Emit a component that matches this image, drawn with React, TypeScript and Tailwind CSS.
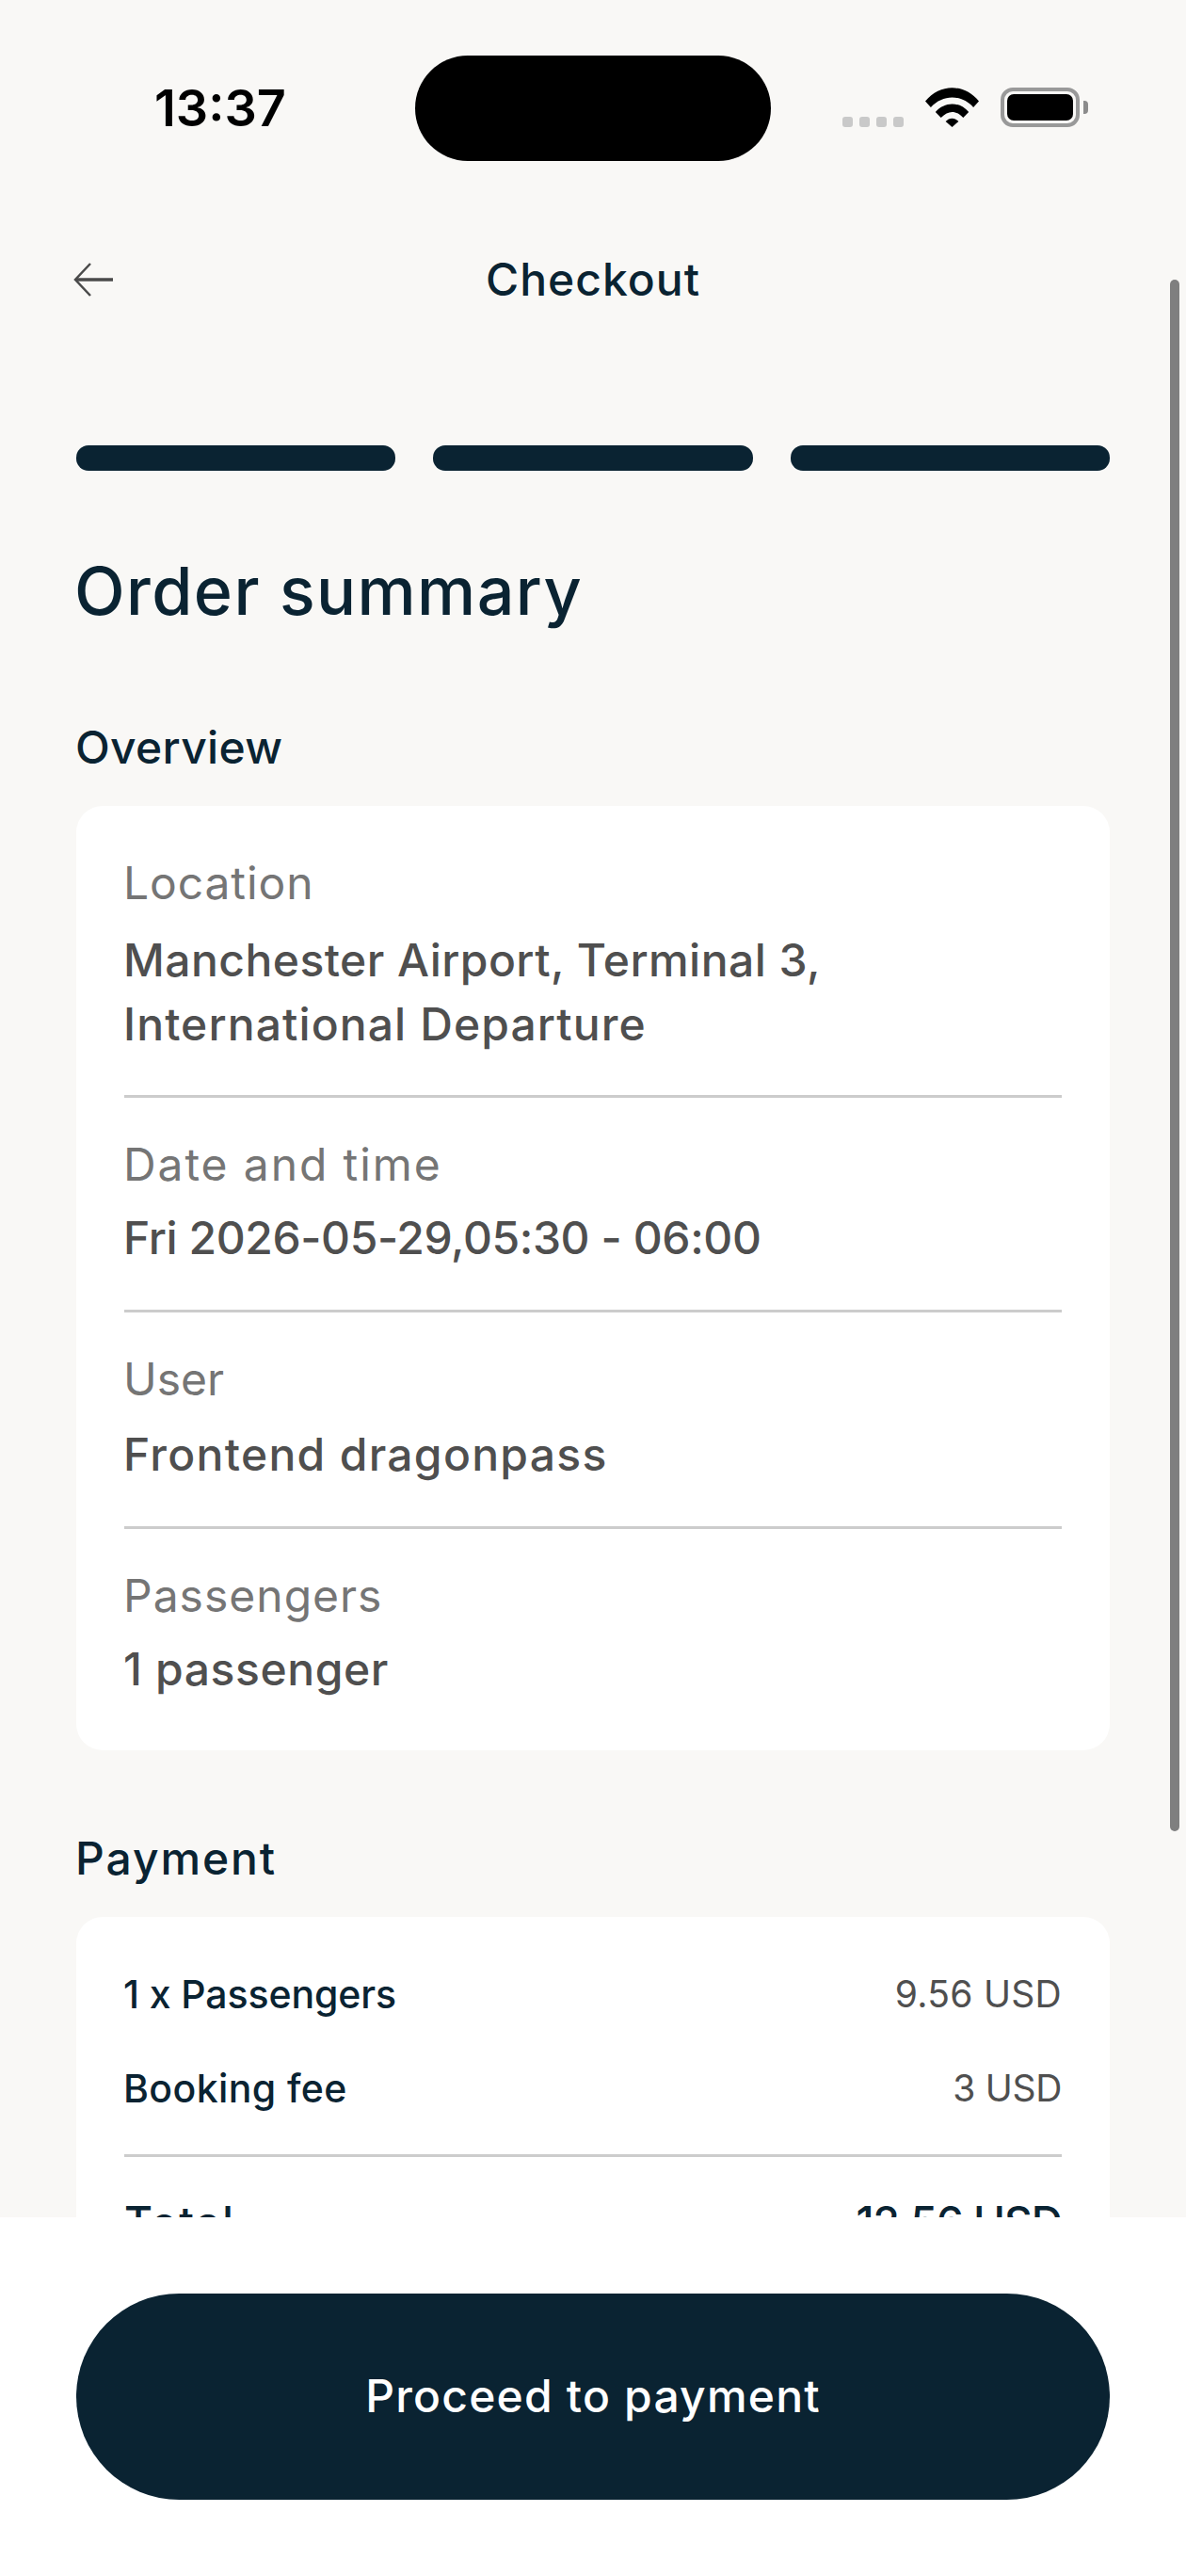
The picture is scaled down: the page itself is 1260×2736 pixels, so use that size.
const font = { fontFamily: 'Inter, "Noto Sans", sans-serif' }

const overview = [
  {
    label: 'Location',
    rowClass: 'pt-[32px] pb-[41px]',
    labelClass: 'tracking-[0.9px]',
    valueClass: 'mt-[18px] leading-[68px]',
    lines: [
      { text: 'Manchester Airport, Terminal 3,', cls: 'tracking-[0.45px]' },
      { text: 'International Departure', cls: 'tracking-[1.1px]' },
    ],
  },
  {
    label: 'Date and time',
    rowClass: 'border-t-[3px] border-[#cccccc] pt-[41px] pb-[41px]',
    labelClass: 'tracking-[1.9px]',
    valueClass: 'mt-[13px] leading-[70px]',
    lines: [{ text: 'Fri 2026-05-29,05:30 - 06:00', cls: 'tracking-[-0.4px]' }],
  },
  {
    label: 'User',
    rowClass: 'border-t-[3px] border-[#cccccc] pt-[41px] pb-[41px]',
    labelClass: '',
    valueClass: 'mt-[15px] leading-[70px]',
    lines: [{ text: 'Frontend dragonpass', cls: 'tracking-[1.3px]' }],
  },
  {
    label: 'Passengers',
    rowClass: 'border-t-[3px] border-[#cccccc] pt-[41px] pb-[44px]',
    labelClass: 'tracking-[1px]',
    valueClass: 'mt-[13px] leading-[70px]',
    lines: [{ text: '1 passenger', cls: 'tracking-[0.6px]' }],
  },
]

function WifiIcon() {
  return (
    <svg width="57" height="42" viewBox="0 0 58 42" fill="#000" preserveAspectRatio="none">
      <path d="M0 14.5 C16 -4.5 42 -4.5 58 14.5 L52 21 C39 7 19 7 6 21 Z" />
      <path d="M11 26 C21 14.5 37 14.5 47 26 L41 32 C33 24 25 24 17 32 Z" />
      <path d="M22 36 C26 31.5 32 31.5 36 36 L29 42 Z" />
    </svg>
  )
}

function BatteryIcon() {
  return (
    <div className="flex items-center">
      <div className="w-[84px] h-[42px] rounded-[13px] border-[4px] border-[#999999] p-[3px]">
        <div className="w-full h-full rounded-[7px] bg-black" />
      </div>
      <div className="w-[5px] h-[14px] ml-[4px] rounded-r-[4px] bg-[#8c8c8c]" />
    </div>
  )
}

function StatusBar() {
  return (
    <div className="relative h-[171px] pt-[59px] flex justify-center">
      <div className="absolute left-[164px] top-[87px] text-[54px] leading-[56px] font-semibold text-black">13:37</div>
      <div className="w-[378px] h-[112px] rounded-[56px] bg-black" />
      <div className="absolute left-[895px] top-[93px] flex items-end">
        <div className="flex gap-[7px] mr-[23px]">
          <div className="w-[11px] h-[11px] rounded-[3px] bg-[#c9c9c9]" />
          <div className="w-[11px] h-[11px] rounded-[3px] bg-[#c9c9c9]" />
          <div className="w-[11px] h-[11px] rounded-[3px] bg-[#c9c9c9]" />
          <div className="w-[11px] h-[11px] rounded-[3px] bg-[#c9c9c9]" />
        </div>
        <WifiIcon />
        <div className="ml-[23px]">
          <BatteryIcon />
        </div>
      </div>
    </div>
  )
}

export default function App() {
  return (
    <div className="relative w-[1260px] h-[2736px] flex flex-col overflow-hidden bg-[#f9f8f6]" style={font}>
      <div className="flex-1 overflow-hidden">
        <StatusBar />

        {/* Header */}
        <div className="relative mt-[81px] h-[90px] flex items-center justify-center">
          <svg className="absolute left-[78px] top-[27px]" width="42" height="36" viewBox="0 0 42 36" fill="none" stroke="#4a4a4a">
            <path d="M42 18 H3" strokeWidth="3.5" />
            <path d="M18 1 L2 18 L18 35" strokeWidth="2.5" />
          </svg>
          <span className="text-[48px] leading-[60px] font-medium tracking-[1px] text-[#0a2332]">Checkout</span>
        </div>

        <div className="px-[81px]">
          {/* Steps */}
          <div className="mt-[131px] flex gap-[40px]">
            <div className="flex-1 h-[27px] rounded-[13px] bg-[#0a2332]" />
            <div className="flex-1 h-[27px] rounded-[13px] bg-[#0a2332]" />
            <div className="flex-1 h-[27px] rounded-[13px] bg-[#0a2332]" />
          </div>

          <h1 className="-ml-[2px] mt-[86px] text-[70px] leading-[84px] font-medium tracking-[1.4px] text-[#0a2332]">Order summary</h1>

          <h2 className="-ml-[1px] mt-[94px] text-[48px] leading-[60px] font-medium tracking-[0.3px] text-[#0a2332]">Overview</h2>

          {/* Overview card */}
          <div className="mt-[32px] rounded-[28px] bg-white px-[51px] pt-[20px] pb-[7px]">
            {overview.map(item => (
              <div key={item.label} className={item.rowClass}>
                <div className={`-ml-[1px] text-[48px] leading-[60px] text-[#757575] ${item.labelClass}`}>{item.label}</div>
                <div className={`-ml-[1px] text-[48px] font-medium text-[#4f4f4f] ${item.valueClass}`}>
                  {item.lines.map(line => (
                    <div key={line.text} className={line.cls}>{line.text}</div>
                  ))}
                </div>
              </div>
            ))}
          </div>

          <h2 className="-ml-[1px] mt-[85px] text-[48px] leading-[60px] font-medium tracking-[1.9px] text-[#0a2332]">Payment</h2>

          {/* Payment card */}
          <div className="mt-[32px] rounded-[28px] bg-white px-[51px] pt-[57px] pb-[60px]">
            <div className="flex justify-between text-[39px] leading-[50px]">
              <span className="-ml-[1px] font-medium text-[41px] tracking-[-0.1px] text-[#0a2332]">1 x Passengers</span>
              <span className="text-[#4f4f4f] tracking-[0.3px]">9.56 USD</span>
            </div>
            <div className="mt-[50px] flex justify-between text-[39px] leading-[50px]">
              <span className="-ml-[1px] font-medium text-[41px] tracking-[0.4px] text-[#0a2332]">Booking fee</span>
              <span className="text-[#4f4f4f] tracking-[-0.3px]">3 USD</span>
            </div>
            <div className="mt-[45px] border-t-[3px] border-[#cccccc]" />
            <div className="mt-[41px] flex justify-between text-[46px] leading-[56px] font-medium text-[#0a2332]">
              <span className="tracking-[2px]">Total</span>
              <span className="tracking-[-1px]">12.56 USD</span>
            </div>
          </div>
        </div>
      </div>

      {/* Footer */}
      <div className="h-[381px] shrink-0 bg-white px-[81px] pt-[81px]">
        <button className="w-full h-[219px] rounded-[110px] bg-[#0a2332] pb-[2px] text-[48px] leading-[60px] font-medium tracking-[1.2px] text-white">
          Proceed to payment
        </button>
      </div>

      {/* Scrollbar */}
      <div className="absolute left-[1243px] top-[297px] w-[10px] h-[1648px] rounded-[5px] bg-[#7f7f7f]" />
    </div>
  )
}
